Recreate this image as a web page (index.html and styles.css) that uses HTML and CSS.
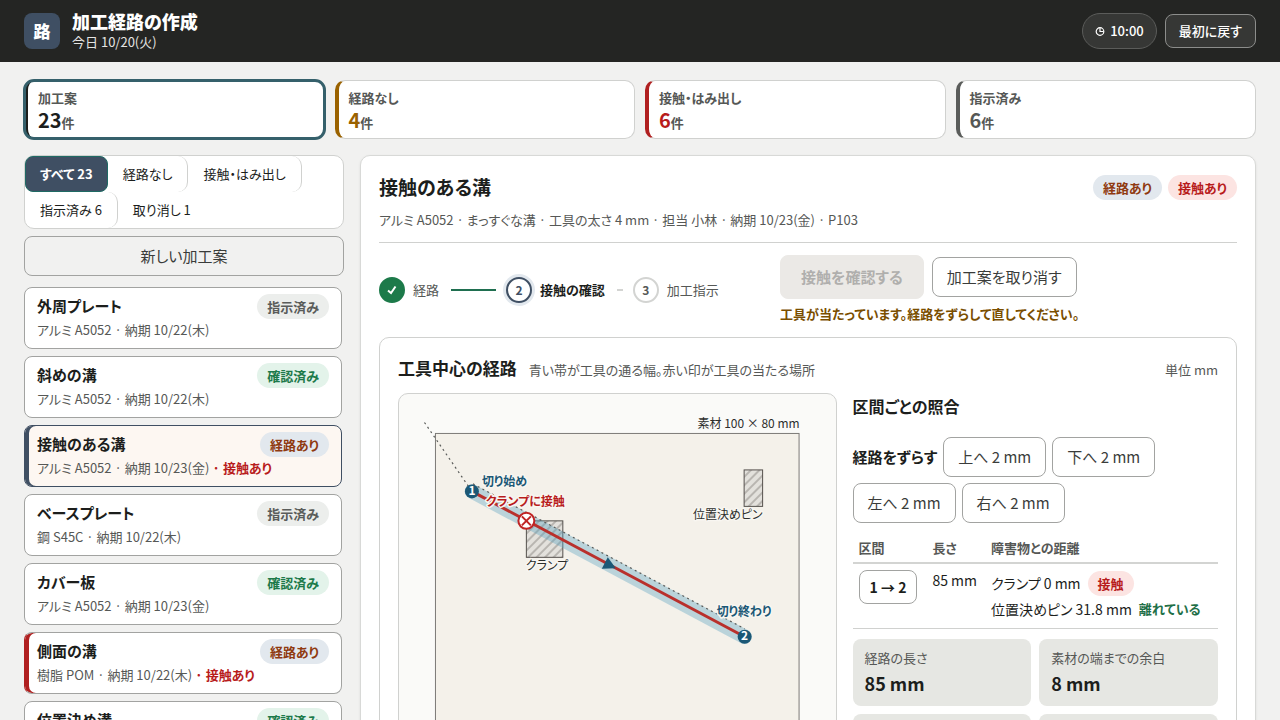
FILE: index.html
```html
<!DOCTYPE html>
<html lang="ja">
<head>
<meta charset="utf-8">
<meta name="viewport" content="width=device-width, initial-scale=1">
<title>加工経路の作成</title>
<link rel="stylesheet" href="styles.css">
</head>
<body>
<header class="topbar">
  <div class="logo" aria-hidden="true">路</div>
  <div class="brand">
    <h1 class="brand-title">加工経路の作成</h1>
    <p class="brand-date">今日 10/20(火)</p>
  </div>
  <div class="topbar-tools">
    <span class="clock">
      <svg class="clock-icon" viewBox="0 0 10 10" aria-hidden="true"><circle cx="5" cy="5.500" r="3.800"/><path d="M5 2v3.500h3.500"/></svg>
      10:00
    </span>
    <button class="reset" type="button">最初に戻す</button>
  </div>
</header>

<main class="page">
  <section class="stats" aria-label="集計">
    <button class="stat stat-all is-selected" type="button"><span class="stat-label">加工案</span><span class="stat-value"><b>23</b>件</span></button>
    <button class="stat stat-none" type="button"><span class="stat-label">経路なし</span><span class="stat-value"><b>4</b>件</span></button>
    <button class="stat stat-hit" type="button"><span class="stat-label">接触・はみ出し</span><span class="stat-value"><b>6</b>件</span></button>
    <button class="stat stat-done" type="button"><span class="stat-label">指示済み</span><span class="stat-value"><b>6</b>件</span></button>
  </section>

  <div class="columns">
    <aside class="sidebar">
      <div class="filters" role="group" aria-label="絞り込み">
        <button class="filter is-active" type="button">すべて 23</button>
        <button class="filter" type="button">経路なし</button>
        <button class="filter" type="button">接触・はみ出し</button>
        <button class="filter" type="button">指示済み 6</button>
        <button class="filter filter-last" type="button">取り消し 1</button>
      </div>
      <button class="new-plan" type="button">新しい加工案</button>
      <div class="plans">
        <button class="plan" type="button">
          <span class="plan-head"><span class="plan-name">外周プレート</span><span class="pill pill-gray">指示済み</span></span>
          <span class="plan-meta">アルミ A5052 · 納期 10/22(木)</span>
        </button>
        <button class="plan" type="button">
          <span class="plan-head"><span class="plan-name">斜めの溝</span><span class="pill pill-green">確認済み</span></span>
          <span class="plan-meta">アルミ A5052 · 納期 10/22(木)</span>
        </button>
        <button class="plan is-current" type="button">
          <span class="plan-head"><span class="plan-name">接触のある溝</span><span class="pill pill-route">経路あり</span></span>
          <span class="plan-meta">アルミ A5052 · 納期 10/23(金) <b class="alert">· 接触あり</b></span>
        </button>
        <button class="plan" type="button">
          <span class="plan-head"><span class="plan-name">ベースプレート</span><span class="pill pill-gray">指示済み</span></span>
          <span class="plan-meta">鋼 S45C · 納期 10/22(木)</span>
        </button>
        <button class="plan" type="button">
          <span class="plan-head"><span class="plan-name">カバー板</span><span class="pill pill-green">確認済み</span></span>
          <span class="plan-meta">アルミ A5052 · 納期 10/23(金)</span>
        </button>
        <button class="plan has-hit" type="button">
          <span class="plan-head"><span class="plan-name">側面の溝</span><span class="pill pill-route">経路あり</span></span>
          <span class="plan-meta">樹脂 POM · 納期 10/22(木) <b class="alert">· 接触あり</b></span>
        </button>
        <button class="plan" type="button">
          <span class="plan-head"><span class="plan-name">位置決め溝</span><span class="pill pill-green">確認済み</span></span>
          <span class="plan-meta">アルミ A5052 · 納期 10/23(金)</span>
        </button>
      </div>
    </aside>

    <section class="detail">
      <div class="detail-head">
        <h2 class="detail-title">接触のある溝</h2>
        <div class="detail-pills"><span class="pill pill-route">経路あり</span><span class="pill pill-red">接触あり</span></div>
      </div>
      <p class="detail-meta">アルミ A5052 · まっすぐな溝 · 工具の太さ 4 mm · 担当 小林 · 納期 10/23(金) · P103</p>

      <div class="progress">
        <ol class="steps">
          <li class="step step-done">
            <span class="step-mark"><svg class="check" viewBox="0 0 12 12" aria-hidden="true"><path d="M2 6.500 5 9 9.500 2.500"/></svg></span>経路
          </li>
          <li class="step-line line-done" aria-hidden="true"></li>
          <li class="step step-now"><span class="step-mark">2</span>接触の確認</li>
          <li class="step-line line-next" aria-hidden="true"></li>
          <li class="step"><span class="step-mark">3</span>加工指示</li>
        </ol>
        <div class="actions">
          <div class="action-row">
            <button class="confirm" type="button" disabled>接触を確認する</button>
            <button class="btn" type="button">加工案を取り消す</button>
          </div>
          <p class="warning">工具が当たっています。経路をずらして直してください。</p>
        </div>
      </div>

      <div class="work">
        <div class="work-head">
          <h3 class="work-title">工具中心の経路</h3>
          <span class="work-hint">青い帯が工具の通る幅。赤い印が工具の当たる場所</span>
          <span class="work-unit">単位 mm</span>
        </div>
        <div class="work-body">
          <div class="plot">
            <svg class="drawing" viewBox="0 0 437 372" role="img" aria-label="素材と工具経路の図">
              <defs>
                <pattern id="hatch" width="6" height="6" patternUnits="userSpaceOnUse" patternTransform="rotate(45)">
                  <rect class="hatch-bg" width="6" height="6"/><line class="hatch-line" x1="3" y1="0" x2="3" y2="6"/>
                </pattern>
              </defs>
              <rect class="stock" x="36.500" y="39.500" width="364" height="291"/>
              <text class="label" x="401" y="34" text-anchor="end">素材 100 × 80 mm</text>
              <rect class="clamp" x="127.500" y="127" width="36.500" height="36.500"/>
              <rect class="clamp" x="345.500" y="76" width="18.500" height="36.500"/>
              <line class="band" x1="73" y1="97.500" x2="346" y2="243"/>
              <path class="rapid" d="M25.500 28.500 73 97.500M74 90 346 235"/>
              <line class="path" x1="73" y1="97.500" x2="346" y2="243"/>
              <path class="arrow" d="M209 163.500 217 174.500 203 175z"/>
              <circle class="node" cx="73" cy="97.500" r="7"/>
              <circle class="node" cx="346" cy="243" r="7"/>
              <text class="node-num" x="73" y="101" text-anchor="middle">1</text>
              <text class="node-num" x="346" y="246" text-anchor="middle">2</text>
              <text class="label halo blue" x="83" y="92">切り始め</text>
              <text class="label halo blue" x="318" y="222">切り終わり</text>
              <text class="label halo" x="127" y="176">クランプ</text>
              <text class="label halo" x="364" y="125" text-anchor="end">位置決めピン</text>
              <text class="label halo red" x="87" y="112">クランプに接触</text>
              <circle class="hit" cx="127.500" cy="127" r="8"/>
              <path class="hit-x" d="M123 122.500l9 9M132 122.500l-9 9"/>
            </svg>
          </div>
          <div class="check-panel">
            <h4 class="panel-title">区間ごとの照合</h4>
            <div class="nudge" role="group" aria-labelledby="nudge-label">
              <span class="nudge-label" id="nudge-label">経路をずらす</span>
              <button class="btn" type="button">上へ 2 mm</button>
              <button class="btn" type="button">下へ 2 mm</button>
              <button class="btn" type="button">左へ 2 mm</button>
              <button class="btn" type="button">右へ 2 mm</button>
            </div>
            <table class="segments">
              <thead><tr><th scope="col">区間</th><th scope="col">長さ</th><th scope="col">障害物との距離</th></tr></thead>
              <tbody>
                <tr>
                  <td><button class="segment" type="button">1 → 2</button></td>
                  <td class="length">85 mm</td>
                  <td>
                    <div class="distance">クランプ 0 mm <span class="pill pill-red">接触</span></div>
                    <div class="distance">位置決めピン 31.8 mm <b class="clear">離れている</b></div>
                  </td>
                </tr>
              </tbody>
            </table>
            <dl class="metrics">
              <div class="metric"><dt>経路の長さ</dt><dd>85 mm</dd></div>
              <div class="metric"><dt>素材の端までの余白</dt><dd>8 mm</dd></div>
              <div class="metric"><dt>工具の太さ</dt><dd>4 mm</dd></div>
              <div class="metric"><dt>接触</dt><dd>1 か所</dd></div>
            </dl>
          </div>
        </div>
      </div>
    </section>
  </div>
</main>
</body>
</html>
```
FILE: styles.css
```css
* { box-sizing: border-box; }

html { height: 100%; overflow: hidden; }

body {
  margin: 0;
  height: 100%;
  overflow: hidden;
  background: #f1f1f0;
  color: #1c1e1c;
  font-family: "Noto Sans CJK JP", sans-serif;
  font-size: 14px;
  line-height: 20px;
  font-feature-settings: "palt";
}

h1, h2, h3, h4, p, ol, dl, dd { margin: 0; padding: 0; }

button {
  margin: 0;
  font: inherit;
  font-feature-settings: inherit;
  color: inherit;
  cursor: pointer;
}

/* Top bar */
.topbar {
  display: flex;
  align-items: center;
  gap: 12px;
  height: 62px;
  padding: 0 24px;
  background: #242523;
  color: #fff;
}
.logo {
  display: grid;
  place-items: center;
  width: 36px;
  height: 36px;
  border-radius: 8px;
  background: #3f4f63;
  font-size: 17px;
  font-weight: 800;
}
.brand-title { font-size: 18px; line-height: 22px; font-weight: 800; }
.brand-date { font-size: 13px; line-height: 20px; color: #e4e4e2; }
.topbar-tools { display: flex; align-items: center; gap: 8px; margin-left: auto; }
.clock {
  display: flex;
  align-items: center;
  gap: 5px;
  height: 36px;
  padding: 0 12px;
  border: 1px solid #5b5c5a;
  border-radius: 18px;
  background: #363735;
  font-size: 13px;
  font-weight: 500;
}
.clock-icon { width: 10px; height: 10px; fill: none; stroke: #fff; stroke-width: 1.2; }
.reset {
  height: 34px;
  padding: 0 13px;
  border: 1px solid #8c8d8b;
  border-radius: 8px;
  background: #363735;
  font-size: 13px;
  font-weight: 500;
}

/* Summary cards */
.page { padding: 18px 24px; }
.stats { display: grid; grid-template-columns: repeat(4, 1fr); gap: 10px; }
.stat {
  display: flex;
  flex-direction: column;
  gap: 2px;
  padding: 7px 10px 3px;
  border: 1px solid #d0d1cf;
  border-left: 4px solid #1c1e1c;
  border-radius: 10px;
  background: #fff;
  text-align: left;
  color: #565856;
}
.stat-label { font-size: 13px; line-height: 20px; font-weight: 700; }
.stat-value { font-size: 13px; line-height: 24px; font-weight: 700; }
.stat-value b { font-size: 20px; line-height: 20px; font-weight: 700; }
.stat-all b { color: #1c1e1c; }
.stat-none { border-left-color: #9a6200; }
.stat-none b { color: #9a6200; }
.stat-hit { border-left-color: #b02020; }
.stat-hit b { color: #b81c1c; }
.stat-done { border-left-color: #5a5c5a; }
.stat.is-selected { outline: 3px solid #35606b; outline-offset: -2px; }

.columns {
  display: grid;
  grid-template-columns: 320px 1fr;
  gap: 16px;
  align-items: start;
  margin-top: 16px;
}

/* Sidebar */
.sidebar { display: flex; flex-direction: column; }
.filters {
  display: flex;
  flex-wrap: wrap;
  border: 1px solid #d0d1cf;
  border-radius: 10px;
  background: #fff;
}
.filter {
  height: 36px;
  padding: 0 15px;
  border: 0;
  border-right: 1px solid #d0d1cf;
  border-radius: 10px;
  background: transparent;
  font-size: 13px;
}
.filter-last { border-right-color: transparent; }
.filter.is-active {
  padding: 0 14px;
  border: 1px solid #1f6a64;
  border-radius: 8px;
  background: #3f4f63;
  color: #fff;
  font-weight: 700;
}
.new-plan {
  height: 40px;
  margin-top: 7px;
  border: 1px solid #a2a3a1;
  border-radius: 8px;
  background: #f1f1f0;
  color: #3a3c3a;
  font-size: 15px;
}
.plans { display: flex; flex-direction: column; gap: 7px; margin-top: 11px; padding-right: 2px; }
.plan {
  display: flex;
  flex-direction: column;
  padding: 5px 12px 7px;
  border: 1px solid #a2a3a1;
  border-radius: 8px;
  background: #fff;
  text-align: left;
}
.plan-head { display: flex; align-items: center; justify-content: space-between; line-height: 26px; }
.plan-name { font-size: 15px; font-weight: 700; }
.plan-meta { font-size: 13px; line-height: 22px; color: #565856; }
.plan.is-current { border-color: #3f4f63; background: #fdf7f2; box-shadow: inset 4px 0 0 #3f4f63; }
.plan.has-hit { box-shadow: inset 4px 0 0 #b02020; border-left-color: #b02020; }
.alert { color: #b81c1c; }

.pill {
  display: inline-block;
  padding: 0 10px;
  border-radius: 13px;
  font-size: 13px;
  line-height: 25px;
  font-weight: 700;
}
.pill-gray { background: #eceeec; color: #5a5c5a; }
.pill-green { background: #e3f3ea; color: #1d7a4a; }
.pill-route { background: #e2e8ee; color: #8f3a10; }
.pill-red { background: #fce4e2; color: #b81c1c; }

/* Detail */
.detail {
  padding: 18px;
  border: 1px solid #d8d9d7;
  border-radius: 10px;
  background: #fff;
  box-shadow: 0 1px 3px rgba(0, 0, 0, .08);
}
.detail-head { display: flex; align-items: center; justify-content: space-between; }
.detail-title { font-size: 19px; line-height: 26px; font-weight: 700; }
.detail-pills { display: flex; gap: 6px; }
.detail-meta {
  padding: 10px 0 12px;
  border-bottom: 1px solid #d0d1cf;
  font-size: 13px;
  line-height: 20px;
  color: #565856;
}
.progress {
  display: grid;
  grid-template-columns: 341px 1fr;
  gap: 60px;
  align-items: center;
  padding: 12px 0;
}
.steps { display: flex; align-items: center; list-style: none; }
.step { display: flex; align-items: center; gap: 8px; font-size: 13px; color: #565856; white-space: nowrap; }
.step-mark {
  display: grid;
  place-items: center;
  width: 26px;
  height: 26px;
  border: 2px solid #d3d4d2;
  border-radius: 50%;
  background: #fff;
  font-size: 12px;
  line-height: 16px;
  font-weight: 700;
}
.step-done .step-mark { border-color: #1d7a4a; background: #1d7a4a; }
.check { width: 12px; height: 12px; fill: none; stroke: #fff; stroke-width: 2; }
.step-now { color: #1c1e1c; font-weight: 700; }
.step-now .step-mark { border-color: #3f4f63; color: #3f4f63; box-shadow: 0 0 0 3px #e2e8ee; }
.step-line { height: 2px; background: #d3d4d2; }
.line-done { width: 45px; margin: 0 10px 0 12px; background: #1f6f50; }
.line-next { width: 6px; margin: 0 10px 0 12px; }
.action-row { display: flex; align-items: center; gap: 8px; }
.confirm {
  height: 44px;
  padding: 0 20px;
  border: 1px solid #ebe9e6;
  border-radius: 8px;
  background: #ebe9e6;
  color: #b0afad;
  font-size: 15px;
  font-weight: 700;
}
.btn {
  height: 40px;
  padding: 0 14px;
  border: 1px solid #a2a3a1;
  border-radius: 8px;
  background: #fff;
  color: #3a3c3a;
  font-size: 15px;
}
.warning { margin-top: 4px; font-size: 13px; line-height: 22px; font-weight: 700; color: #7a4e00; }

.work { padding: 18px; border: 1px solid #d0d1cf; border-radius: 10px; }
.work-head { display: flex; align-items: baseline; gap: 12px; }
.work-title { font-size: 17px; line-height: 24px; font-weight: 700; }
.work-hint, .work-unit { font-size: 13px; color: #565856; }
.work-unit { margin-left: auto; }
.work-body {
  display: grid;
  grid-template-columns: 1.2fr 1fr;
  gap: 16px;
  align-items: start;
  margin-top: 13px;
}
.plot { border: 1px solid #d0d1cf; border-radius: 10px; background: #fafaf8; }
.drawing { display: block; width: 100%; height: auto; }
.stock { fill: #f4f1ea; stroke: #7c7a77; stroke-width: 1; }
.hatch-bg { fill: #e3e1dc; }
.hatch-line { stroke: #77736f; stroke-width: .8; }
.clamp { fill: url(#hatch); stroke: #55514d; stroke-width: 1; }
.band { stroke: #5ba3c0; stroke-opacity: .38; stroke-width: 14.5; stroke-linecap: round; }
.rapid { fill: none; stroke: #5a5c5a; stroke-width: 1.2; stroke-dasharray: 2 3.4; }
.path { stroke: #b9302c; stroke-width: 3; }
.arrow, .node { fill: #1b5876; }
.node-num { fill: #fff; font-size: 12px; font-weight: 700; }
.label { fill: #2c2e2c; font-size: 12px; }
.halo { stroke: #f8f6f1; stroke-width: 3; stroke-linejoin: round; paint-order: stroke; }
.blue { fill: #1b5876; font-weight: 700; }
.red { fill: #b81c1c; font-weight: 700; }
.hit { fill: #fff; stroke: #c02424; stroke-width: 2; }
.hit-x { stroke: #c02424; stroke-width: 2; }

.panel-title { font-size: 16px; line-height: 26px; font-weight: 700; }
.nudge { display: flex; flex-wrap: wrap; align-items: center; gap: 6px; margin-top: 18px; }
.nudge-label { font-size: 15px; font-weight: 700; }
.segments { width: 100%; margin-top: 12px; border-collapse: collapse; }
.segments th {
  padding: 3px 6px 4px;
  border-bottom: 2px solid #d3d4d2;
  text-align: left;
  font-size: 13px;
  font-weight: 700;
  color: #565856;
}
.segments td { padding: 6px; border-bottom: 1px solid #d0d1cf; vertical-align: top; white-space: nowrap; }
.segments th:nth-child(3) { width: 100%; }
.segments td:first-child { padding-right: 9px; }
.segments td.length { padding-right: 8px; }
.segment {
  height: 34px;
  padding: 0 10px;
  border: 1px solid #a2a3a1;
  border-radius: 8px;
  background: #fff;
  font-size: 14px;
  font-weight: 700;
}
.distance { display: flex; align-items: center; gap: 7px; line-height: 26px; }
.clear { color: #1f7048; font-size: 13px; }
.metrics { display: grid; grid-template-columns: 1fr 1fr; gap: 8px; margin-top: 10px; }
.metric { padding: 8px 12px; border-radius: 8px; background: #e6e7e3; }
.metric dt { font-size: 13px; line-height: 22px; color: #565856; }
.metric dd { font-size: 18px; line-height: 29px; font-weight: 700; }
```
